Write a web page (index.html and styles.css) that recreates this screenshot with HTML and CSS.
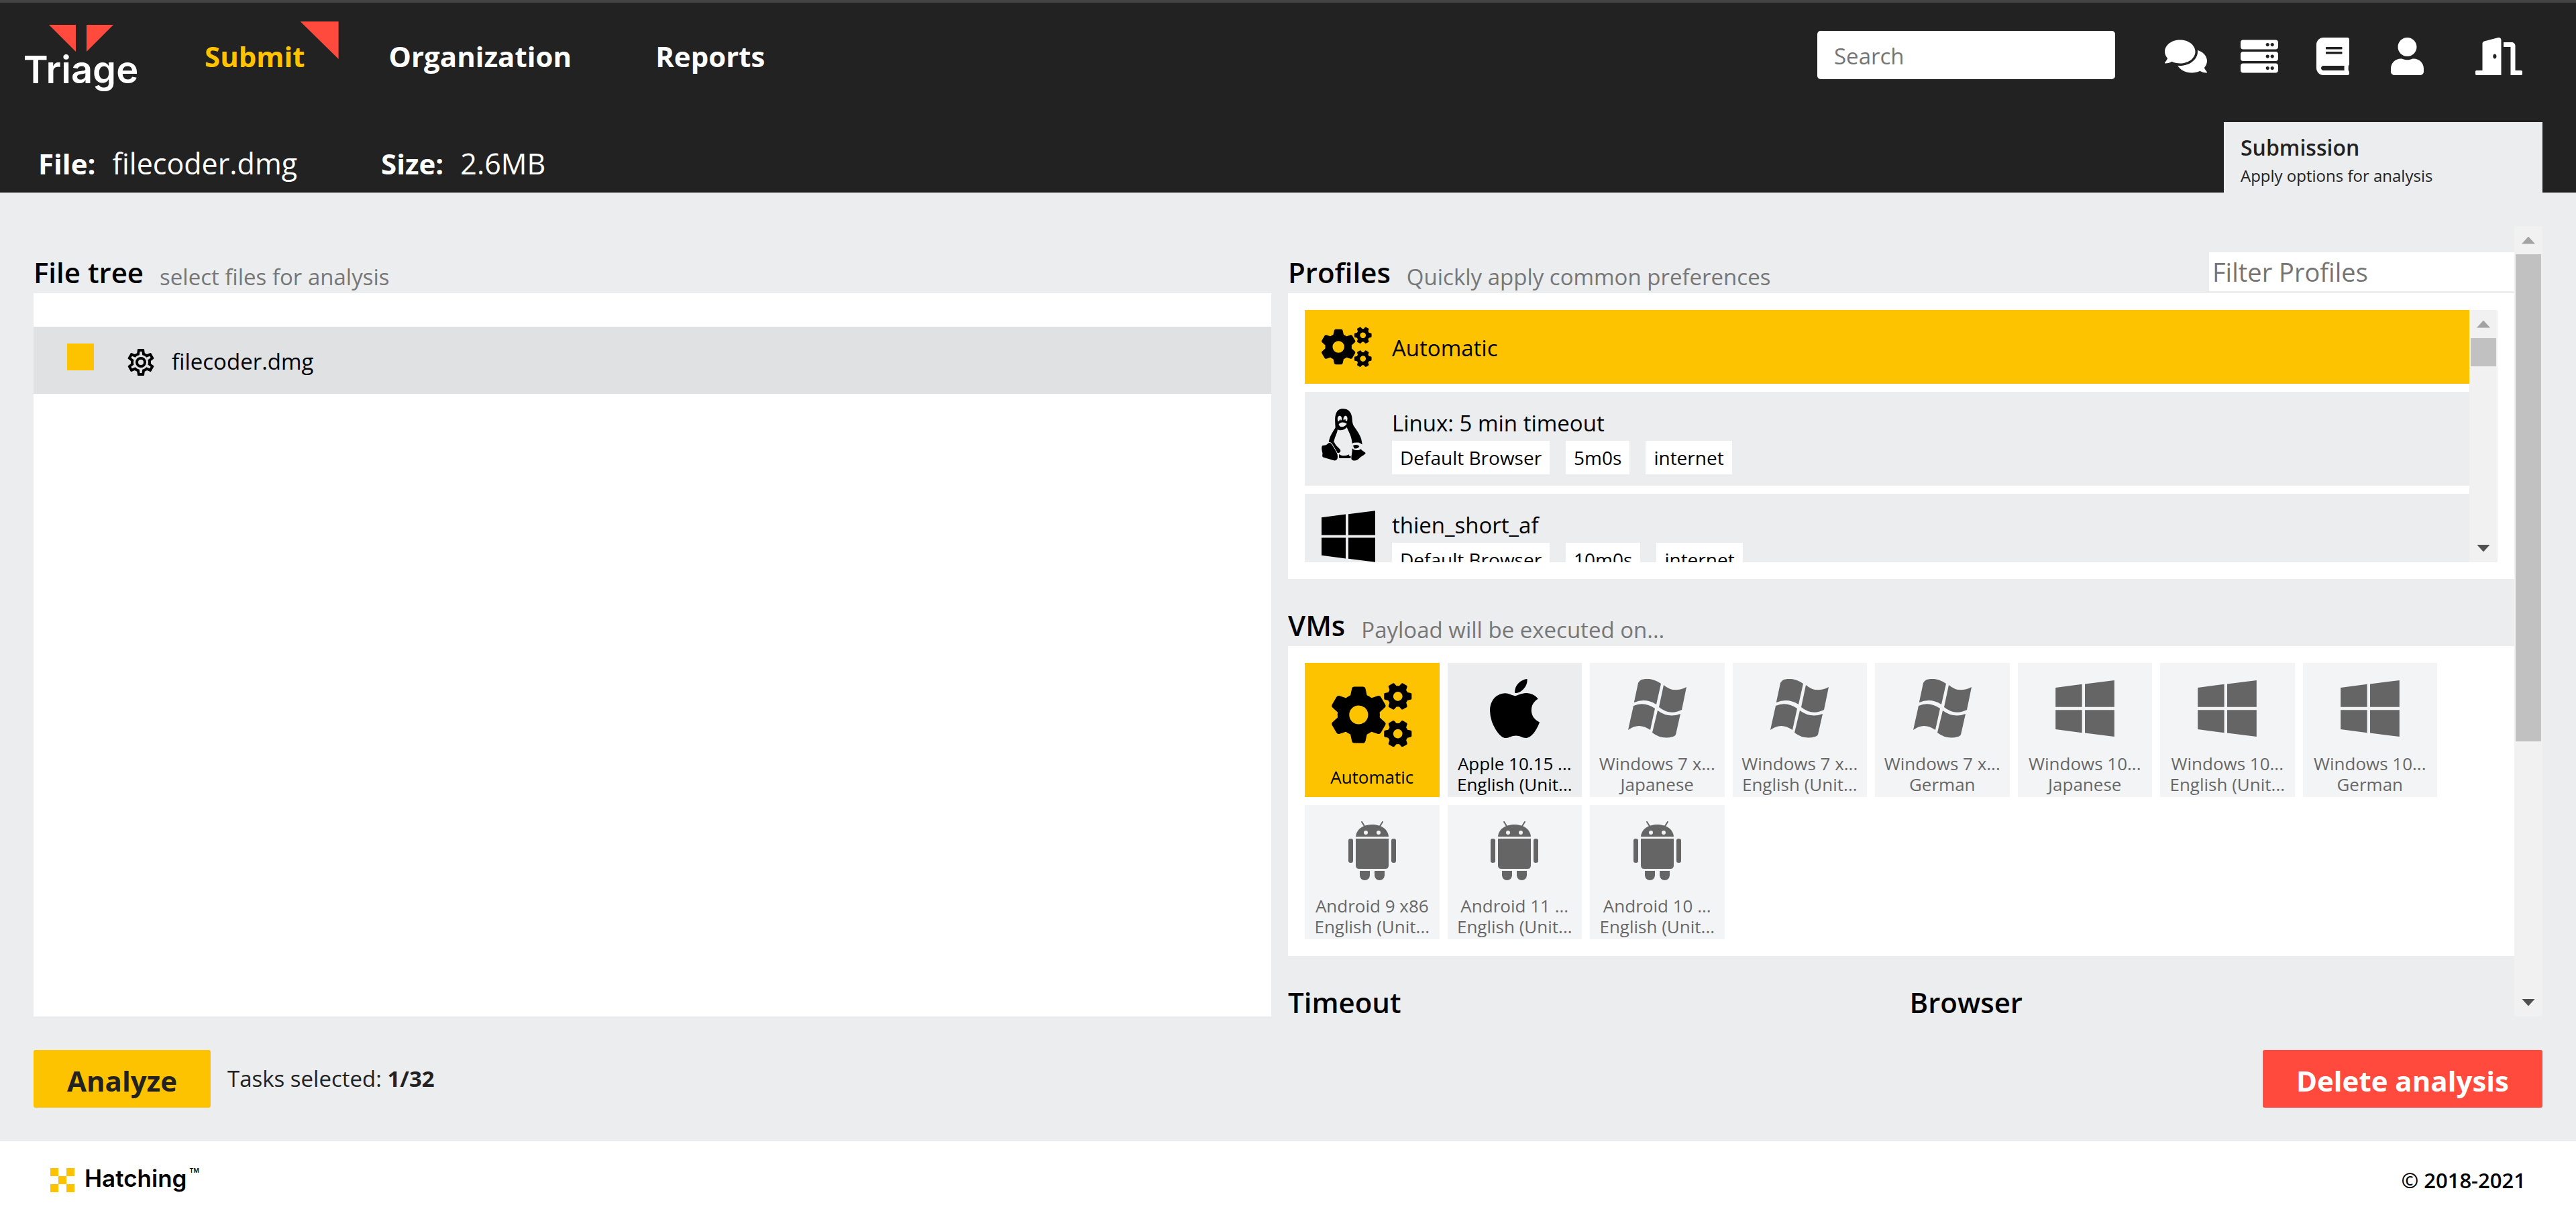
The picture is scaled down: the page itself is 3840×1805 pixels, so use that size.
FILE: index.html
```html
<!DOCTYPE html>
<html lang="en">
<head>
<meta charset="utf-8">
<title>Triage - Submission</title>
<meta name="viewport" content="width=device-width, initial-scale=1">
<link rel="stylesheet" href="styles.css">
</head>
<body>
<svg class="sprite" aria-hidden="true">
  <symbol id="cogs" viewBox="0 0 226 178">
    <g id="cog-big" fill="none" stroke="currentColor">
      <circle cx="76" cy="89" r="43" stroke-width="33"/>
      <g id="tooth-pair" fill="currentColor" stroke="none">
        <path d="M52 38L57 15Q58 10 64 10H88Q94 10 95 15L100 38Z"/>
        <path d="M52 140L57 163Q58 168 64 168H88Q94 168 95 163L100 140Z"/>
      </g>
      <use href="#tooth-pair" transform="rotate(60 76 89)"/>
      <use href="#tooth-pair" transform="rotate(120 76 89)"/>
    </g>
    <use href="#cog-big" transform="translate(186 37) rotate(30) scale(.49) translate(-76 -89)"/>
    <use href="#cog-big" transform="translate(186 142) rotate(30) scale(.49) translate(-76 -89)"/>
  </symbol>
  <symbol id="tux" viewBox="0 0 196 234">
    <path fill="currentColor" d="M61 85C60 60 57 38 64 22C69 6 82 1 95 1C118 1 131 14 135 38C137 55 136 68 146 82C162 105 181 130 180 162L168 200L132 222H80L60 200L31 152C36 120 50 105 61 85Z"/>
    <path class="cut" d="M71 93C80 101 102 96 112 84C120 104 137 128 136 165V212H122C124 206 122 204 118 207C104 213 88 212 77 204V222H68L54 172C50 134 68 118 71 93Z"/>
    <path fill="currentColor" d="M56 150C62 170 84 178 84 188C84 198 74 198 68 198L46 160Z"/>
    <path class="cut" d="M71 50C69 38 75 31 81 32C88 33 91 42 89 51L85 54C86 48 80 46 78 56L73 58ZM97 50C96 39 100 32 107 32C114 33 117 42 113 56L106 53C108 47 102 45 100 53ZM76 70C83 60 98 58 112 68C108 76 98 82 90 82C82 82 76 76 76 70Z"/>
    <path class="edge" fill="currentColor" d="M2 166C8 164 20 166 28 156C33 150 40 152 46 162C54 176 66 192 70 206C74 226 66 234 54 232L8 218C-2 214 5 206 3 198C1 188-3 176 2 166Z"/>
    <path class="edge" fill="currentColor" d="M136 176C146 188 162 188 175 180C180 190 190 192 196 198C196 206 176 212 168 222C158 234 142 236 134 228C128 220 138 200 136 176Z"/>
    <path class="cut" d="M134 158C146 146 172 150 182 160L177 180C164 188 148 188 137 178Z"/>
    <path fill="currentColor" d="M140 166C150 160 160 160 168 168C164 178 150 182 144 176Z"/>
    <path fill="currentColor" d="M138 154C150 148 170 152 180 160V152H138Z"/>
  </symbol>
  <symbol id="win10" viewBox="0 0 240 230">
    <path fill="currentColor" d="M0 30L108 16V109H0ZM120 15L240 0V109H120ZM0 121H108V214L0 200ZM120 121H240V230L120 215Z"/>
  </symbol>
  <symbol id="win7" viewBox="0 0 87 88">
    <path fill="currentColor" d="M9 34L15 6Q16 3 20 1Q35 -3 49 7L42 38Q26 28 9 35ZM53 9Q68 22 87 12L80 46Q62 55 46 42ZM8 40Q24 33 40 44L33 76Q16 64 0 76ZM44 47Q60 59 78 52L71 83Q70 85 67 86Q50 91 36 80Z"/>
  </symbol>
  <symbol id="apple" viewBox="4 32 376 448">
    <path fill="currentColor" d="M318.700 268.700c-.2-36.700 16.400-64.400 50-84.800-18.800-26.900-47.200-41.700-84.700-44.600-35.500-2.800-74.300 20.700-88.500 20.700-15 0-49.400-19.700-76.400-19.700C63.300 141.200 4 184.800 4 273.500q0 39.300 14.400 81.200c12.800 36.700 59 126.700 107.200 125.200 25.200-.6 43-17.900 75.800-17.900 31.800 0 48.300 17.900 76.400 17.900 48.600-.7 90.400-82.500 102.600-119.300-65.200-30.700-61.700-90-61.700-91.900zm-56.600-164.200c27.300-32.400 24.800-61.900 24-72.500-24.100 1.400-52 16.400-67.900 34.900-17.500 19.800-27.800 44.300-25.600 71.900 26.100 2 49.900-11.400 69.500-34.300z"/>
  </symbol>
  <symbol id="android" viewBox="0 0 71 88">
    <g fill="currentColor">
      <path d="M11 23C12 11 23 5 35.500 5S59 11 60 23Z"/>
      <path d="M20 1L25 9M51 1L46 9" stroke="currentColor" stroke-width="2" stroke-linecap="round"/>
      <path d="M11 26H60V66Q60 71 55 71H16Q11 71 11 66Z"/>
      <rect x="0" y="26" width="7" height="36" rx="3"/>
      <rect x="64" y="26" width="7" height="36" rx="3"/>
      <path d="M17 74H32V81Q31 88 24.500 88T17 81ZM39 74H54V81Q53 88 46.500 88T39 81Z"/>
    </g>
    <circle class="cut" cx="26" cy="17" r="3"/>
    <circle class="cut" cx="45" cy="17" r="3"/>
  </symbol>
</svg>

<header class="header">
  <div class="topbar">
    <a class="brand" href="#">
      <svg width="96" height="40" viewBox="0 0 96 40" aria-hidden="true"><path fill="#ff4a3d" d="M0 0H40V40ZM56 0H96L56 40Z"/></svg>
      <span class="brand-name">Triage</span>
    </a>
    <nav class="nav">
      <a class="nav-link active" href="#">Submit</a>
      <a class="nav-link" href="#">Organization</a>
      <a class="nav-link" href="#">Reports</a>
    </nav>
    <input class="search" type="search" placeholder="Search" aria-label="Search">
    <div class="tools">
      <a href="#" aria-label="Chat"><svg viewBox="0 0 576 512"><path d="M416 192c0-88.400-93.100-160-208-160S0 103.600 0 192c0 34.300 14.100 65.900 38 92-13.400 30.200-35.500 54.200-35.800 54.500-2.200 2.300-2.800 5.700-1.500 8.700S4.800 352 8 352c36.600 0 66.900-12.300 88.700-25 32.200 15.700 70.300 25 111.300 25 114.900 0 208-71.600 208-160zm122 220c23.900-26 38-57.700 38-92 0-66.900-53.500-124.200-129.300-148.100.9 6.600 1.300 13.300 1.300 20.100 0 105.900-107.700 192-240 192-10.800 0-21.300-.8-31.700-1.900C207.800 439.600 281.800 480 368 480c41 0 79.100-9.200 111.300-25 21.800 12.700 52.100 25 88.700 25 3.200 0 6.100-1.900 7.300-4.800 1.300-2.900.7-6.300-1.500-8.700-.3-.3-22.400-24.200-35.800-54.500z"/></svg></a>
      <a href="#" aria-label="Machines"><svg viewBox="0 0 512 512"><path id="server-unit" d="M480 160H32c-17.700 0-32-14.300-32-32V64c0-17.700 14.300-32 32-32h448c17.700 0 32 14.300 32 32v64c0 17.700-14.300 32-32 32zm-48-88c-13.300 0-24 10.700-24 24s10.700 24 24 24 24-10.700 24-24-10.700-24-24-24zm-64 0c-13.300 0-24 10.700-24 24s10.700 24 24 24 24-10.700 24-24-10.700-24-24-24z"/><use href="#server-unit" y="160"/><use href="#server-unit" y="320"/></svg></a>
      <a href="#" aria-label="Documentation"><svg viewBox="0 0 448 512"><path d="M448 360V24c0-13.300-10.700-24-24-24H96C43 0 0 43 0 96v320c0 53 43 96 96 96h328c13.300 0 24-10.700 24-24v-16c0-7.500-3.500-14.300-8.900-18.700-4.200-15.400-4.200-59.300 0-74.700 5.400-4.300 8.900-11.100 8.900-18.600zM128 134c0-3.300 2.700-6 6-6h212c3.300 0 6 2.700 6 6v20c0 3.300-2.700 6-6 6H134c-3.300 0-6-2.700-6-6v-20zm0 64c0-3.300 2.700-6 6-6h212c3.300 0 6 2.700 6 6v20c0 3.300-2.700 6-6 6H134c-3.300 0-6-2.700-6-6v-20zm253.400 250H96c-17.700 0-32-14.300-32-32 0-17.600 14.400-32 32-32h285.400c-1.900 17.100-1.900 46.900 0 64z"/></svg></a>
      <a href="#" aria-label="Account"><svg viewBox="0 0 448 512"><path d="M224 256c70.700 0 128-57.300 128-128S294.700 0 224 0 96 57.300 96 128s57.300 128 128 128zm89.600 32h-16.700c-22.200 10.200-46.900 16-72.900 16s-50.600-5.800-72.900-16h-16.700C60.200 288 0 348.200 0 422.400V464c0 26.500 21.500 48 48 48h352c26.500 0 48-21.500 48-48v-41.600c0-74.200-60.200-134.400-134.400-134.400z"/></svg></a>
      <a href="#" aria-label="Log out"><svg viewBox="0 0 640 512"><path d="M624 448h-80V113.450C544 86.190 522.470 64 496 64H384v64h96v384h144c8.840 0 16-7.160 16-16v-32c0-8.840-7.160-16-16-16zM312.240 1.010l-192 49.740C105.990 54.440 96 67.700 96 82.920V448H16c-8.840 0-16 7.160-16 16v32c0 8.840 7.160 16 16 16h336V33.180c0-21.580-19.560-37.410-39.760-32.170zM264 288c-13.250 0-24-14.330-24-32s10.750-32 24-32 24 14.330 24 32-10.750 32-24 32z"/></svg></a>
    </div>
  </div>
  <div class="subbar">
    <dl class="facts">
      <div class="fact"><dt>File:</dt><dd>filecoder.dmg</dd></div>
      <div class="fact"><dt>Size:</dt><dd>2.6MB</dd></div>
    </dl>
    <a class="tab" href="#">
      <span class="tab-title">Submission</span>
      <span class="tab-note">Apply options for analysis</span>
    </a>
  </div>
</header>

<main class="main">
  <div class="workspace">
    <section class="files">
      <div class="section-head"><h2>File tree</h2><p>select files for analysis</p></div>
      <div class="panel tree">
        <label class="file">
          <input class="file-check" type="checkbox" checked>
          <svg width="40" height="40" viewBox="2 2 20 20" aria-hidden="true"><path d="M12,8A4,4 0 0,1 16,12A4,4 0 0,1 12,16A4,4 0 0,1 8,12A4,4 0 0,1 12,8M12,10A2,2 0 0,0 10,12A2,2 0 0,0 12,14A2,2 0 0,0 14,12A2,2 0 0,0 12,10M10,22C9.75,22 9.54,21.82 9.5,21.58L9.13,18.93C8.5,18.68 7.96,18.34 7.44,17.94L4.95,18.95C4.73,19.03 4.46,18.95 4.34,18.73L2.34,15.27C2.21,15.05 2.27,14.78 2.46,14.63L4.57,12.97L4.5,12L4.57,11L2.46,9.37C2.27,9.22 2.21,8.95 2.34,8.73L4.34,5.27C4.46,5.05 4.73,4.96 4.95,5.05L7.44,6.05C7.96,5.66 8.5,5.32 9.13,5.07L9.5,2.42C9.54,2.18 9.75,2 10,2H14C14.25,2 14.46,2.18 14.5,2.42L14.87,5.07C15.5,5.32 16.04,5.66 16.56,6.05L19.05,5.05C19.27,4.96 19.54,5.05 19.66,5.27L21.66,8.73C21.79,8.95 21.73,9.22 21.54,9.37L19.43,11L19.5,12L19.43,13L21.54,14.63C21.73,14.78 21.79,15.05 21.66,15.27L19.66,18.73C19.54,18.95 19.27,19.04 19.05,18.95L16.56,17.95C16.04,18.34 15.5,18.68 14.87,18.93L14.5,21.58C14.46,21.82 14.25,22 14,22H10M11.25,4L10.88,6.61C9.68,6.86 8.62,7.5 7.85,8.39L5.44,7.35L4.69,8.65L6.8,10.2C6.4,11.37 6.4,12.64 6.8,13.8L4.68,15.36L5.43,16.66L7.86,15.62C8.63,16.5 9.68,17.14 10.87,17.38L11.24,20H12.76L13.13,17.39C14.32,17.14 15.37,16.5 16.14,15.62L18.57,16.66L19.32,15.36L17.2,13.81C17.6,12.64 17.6,11.37 17.2,10.2L19.31,8.65L18.56,7.35L16.15,8.39C15.38,7.5 14.32,6.86 13.12,6.62L12.75,4H11.25Z"/></svg>
          <span class="file-name">filecoder.dmg</span>
        </label>
      </div>
    </section>

    <div class="options">
      <div class="options-body">
        <section>
          <div class="section-head">
            <h2>Profiles</h2><p>Quickly apply common preferences</p>
            <input class="filter" type="text" placeholder="Filter Profiles" aria-label="Filter Profiles">
          </div>
          <div class="panel profiles">
            <div class="profile-list">
              <button class="profile selected" type="button">
                <span class="profile-icon"><svg width="75" height="60"><use href="#cogs"/></svg></span>
                <span class="profile-text"><span class="profile-name">Automatic</span></span>
              </button>
              <button class="profile" type="button">
                <span class="profile-icon"><svg width="66" height="78"><use href="#tux"/></svg></span>
                <span class="profile-text">
                  <span class="profile-name">Linux: 5 min timeout</span>
                  <span class="tags"><span class="tag">Default Browser</span><span class="tag">5m0s</span><span class="tag">internet</span></span>
                </span>
              </button>
              <button class="profile" type="button">
                <span class="profile-icon"><svg width="80" height="77"><use href="#win10"/></svg></span>
                <span class="profile-text">
                  <span class="profile-name">thien_short_af</span>
                  <span class="tags"><span class="tag">Default Browser</span><span class="tag">10m0s</span><span class="tag">internet</span></span>
                </span>
              </button>
            </div>
            <div class="scrollbar" aria-hidden="true">
              <span class="arrow up"></span>
              <span class="track"><span class="thumb" style="height: 14.4%"></span></span>
              <span class="arrow down"></span>
            </div>
          </div>
        </section>

        <section>
          <div class="section-head"><h2>VMs</h2><p>Payload will be executed on...</p></div>
          <div class="panel vms-panel">
            <div class="vms">
              <button class="vm selected" type="button"><span class="vm-icon"><svg width="120" height="95"><use href="#cogs"/></svg></span><span>Automatic</span></button>
              <button class="vm" type="button"><span class="vm-icon"><svg width="74" height="88"><use href="#apple"/></svg></span><span>Apple 10.15 ...</span><span>English (Unit...</span></button>
              <button class="vm" type="button" disabled><span class="vm-icon"><svg width="87" height="88"><use href="#win7"/></svg></span><span>Windows 7 x...</span><span>Japanese</span></button>
              <button class="vm" type="button" disabled><span class="vm-icon"><svg width="87" height="88"><use href="#win7"/></svg></span><span>Windows 7 x...</span><span>English (Unit...</span></button>
              <button class="vm" type="button" disabled><span class="vm-icon"><svg width="87" height="88"><use href="#win7"/></svg></span><span>Windows 7 x...</span><span>German</span></button>
              <button class="vm" type="button" disabled><span class="vm-icon"><svg width="88" height="84"><use href="#win10"/></svg></span><span>Windows 10...</span><span>Japanese</span></button>
              <button class="vm" type="button" disabled><span class="vm-icon"><svg width="88" height="84"><use href="#win10"/></svg></span><span>Windows 10...</span><span>English (Unit...</span></button>
              <button class="vm" type="button" disabled><span class="vm-icon"><svg width="88" height="84"><use href="#win10"/></svg></span><span>Windows 10...</span><span>German</span></button>
              <button class="vm" type="button" disabled><span class="vm-icon"><svg width="71" height="88"><use href="#android"/></svg></span><span>Android 9 x86</span><span>English (Unit...</span></button>
              <button class="vm" type="button" disabled><span class="vm-icon"><svg width="71" height="88"><use href="#android"/></svg></span><span>Android 11 ...</span><span>English (Unit...</span></button>
              <button class="vm" type="button" disabled><span class="vm-icon"><svg width="71" height="88"><use href="#android"/></svg></span><span>Android 10 ...</span><span>English (Unit...</span></button>
            </div>
          </div>
        </section>

        <div class="pair">
          <div class="section-head"><h2>Timeout</h2></div>
          <div class="section-head"><h2>Browser</h2></div>
        </div>
      </div>
      <div class="scrollbar" aria-hidden="true">
        <span class="arrow up"></span>
        <span class="track"><span class="thumb" style="height: 66.4%"></span></span>
        <span class="arrow down"></span>
      </div>
    </div>
  </div>

  <div class="actions">
    <button class="action analyze" type="button">Analyze</button>
    <p class="tasks">Tasks selected: <strong>1/32</strong></p>
    <button class="action delete" type="button">Delete analysis</button>
  </div>
</main>

<footer class="footer">
  <a class="hatching" href="#">
    <svg width="36" height="36" viewBox="0 0 36 36" aria-hidden="true"><path fill="#fdc300" d="M0 0H12V12H0ZM24 0H36V12H24ZM12 12H24V24H12ZM0 24H12V36H0ZM24 24H36V36H24Z"/></svg>
    <span class="hatching-name">Hatching</span><span class="tm">TM</span>
  </a>
  <p class="copyright">© 2018-2021</p>
</footer>
</body>
</html>
```

FILE: styles.css
```css
:root {
  --dark: #222;
  --page: #ebedef;
  --yellow: #fdc300;
  --red: #ff4a3d;
  --muted: #777;
}

* { box-sizing: border-box; }

body {
  margin: 0;
  height: 100vh;
  display: flex;
  flex-direction: column;
  background: #fff;
  color: #000;
  font-family: "Open Sans", "Noto Sans", sans-serif;
  font-size: 33px;
  line-height: 48px;
}

h2, p, dl, dd { margin: 0; }
a { color: inherit; text-decoration: none; }
button, input { font: inherit; color: inherit; border: 0; padding: 0; margin: 0; }
input::placeholder { color: #757575; opacity: 1; }
svg { display: block; flex: none; }

.sprite { position: absolute; width: 0; height: 0; }
.cut { fill: var(--page); }
.edge { stroke: var(--page); stroke-width: 6; paint-order: stroke; }

/* Header */
.header {
  background: var(--dark);
  color: #fff;
  border-top: 4px solid #444;
}

.topbar {
  display: flex;
  align-items: center;
  height: 160px;
  padding: 0 35px 0 36px;
}

.brand {
  align-self: flex-start;
  display: flex;
  flex-direction: column;
  align-items: center;
  width: 169px;
  padding-top: 33px;
}

.brand-name {
  font-family: Inter, sans-serif;
  font-size: 56px;
  line-height: 54px;
  font-weight: 600;
}

.nav {
  display: flex;
  gap: 25px;
  margin: 0 auto 0 50px;
}

.nav-link {
  position: relative;
  padding: 0 50px;
  font-size: 42px;
  line-height: 104px;
  font-weight: 700;
}

.nav-link.active { color: var(--yellow); }

.nav-link.active::after {
  content: "";
  position: absolute;
  top: 0;
  right: 0;
  width: 57px;
  height: 56px;
  background: var(--red);
  clip-path: polygon(0 0, 100% 0, 100% 100%);
}

.search {
  width: 444px;
  height: 72px;
  margin-bottom: 4px;
  padding: 3px 25px 0;
  border-radius: 5px;
  background: #fff;
  color: #000;
  appearance: none;
}

.tools {
  display: grid;
  grid-template-columns: 110px 110px 108px 114px 160px;
  justify-items: center;
  margin-left: 50px;
}

.tools svg { height: 56px; fill: #fff; }

.subbar {
  display: flex;
  justify-content: space-between;
  align-items: flex-end;
  padding: 18px 50px 0 57px;
}

.facts {
  display: flex;
  gap: 125px;
  padding-bottom: 13px;
  font-size: 43px;
  line-height: 60px;
}

.fact { display: flex; gap: 25px; }
.fact dt { font-weight: 700; font-size: 42px; }

.tab {
  display: flex;
  flex-direction: column;
  gap: 6px;
  width: 475px;
  padding: 18px 25px 9px;
  background: var(--page);
  color: var(--dark);
}

.tab-title { font-size: 32px; line-height: 40px; font-weight: 600; }
.tab-note { font-size: 24px; line-height: 32px; }

/* Workspace */
.main {
  flex: 1;
  min-height: 0;
  display: flex;
  flex-direction: column;
  gap: 50px;
  padding: 50px;
  background: var(--page);
}

.workspace {
  flex: 1;
  min-height: 0;
  display: grid;
  grid-template-columns: calc(50% - 25px) minmax(0, 1fr);
  grid-template-rows: minmax(0, 1fr);
  gap: 25px;
}

.files { display: flex; flex-direction: column; }

.section-head {
  display: flex;
  align-items: flex-end;
  gap: 24px;
  height: 100px;
}

.section-head h2 { font-size: 42px; line-height: 62px; font-weight: 600; }
.section-head p { color: var(--muted); }

.panel { background: #fff; }

.tree { flex: 1; padding-top: 50px; }

.file {
  display: flex;
  align-items: center;
  height: 100px;
  padding: 0 50px;
  background: #dfe1e3;
}

.file-check {
  appearance: none;
  width: 40px;
  height: 40px;
  margin: 0 50px 10px 0;
  background: var(--yellow);
}

.file svg { margin-top: 6px; }
.file-name { margin-left: 26px; padding-top: 3px; }

.options { display: flex; min-height: 0; }
.options-body { flex: 1; min-width: 0; overflow: hidden; }

.filter {
  width: 455px;
  height: 58px;
  margin: 0 0 3px auto;
  padding: 0 5px;
  background: #fff;
  font-size: 38px;
}

.profiles {
  display: flex;
  height: 426px;
  padding: 25px;
}

.profile-list {
  flex: 1;
  display: flex;
  flex-direction: column;
  gap: 12px;
  overflow: hidden;
}

.profile {
  flex: none;
  display: flex;
  align-items: flex-start;
  padding: 25px 25px 17px;
  background: var(--page);
  text-align: left;
}

.profile-icon { width: 105px; }
.profile-text { display: flex; flex-direction: column; gap: 4px; }
.profile-name { line-height: 44px; }
.profile.selected { align-items: center; padding: 25px; }
.profile.selected .profile-name { padding-top: 3px; }
.profile.selected,
.vm.selected { background: var(--yellow); }

.tags { display: flex; gap: 24px; }

.tag {
  padding: 0 12px;
  background: #fff;
  font-size: 28px;
  line-height: 50px;
}

.vms-panel { padding: 25px; }

.vms {
  display: grid;
  grid-template-columns: repeat(auto-fill, minmax(200px, 1fr));
  grid-auto-rows: 200px;
  gap: 12px;
  max-width: 1688px;
}

.vm {
  display: flex;
  flex-direction: column;
  align-items: center;
  padding-bottom: 3px;
  background: var(--page);
  font-size: 26px;
  line-height: 31px;
  white-space: nowrap;
}

.vm.selected { padding-bottom: 14px; }
.vm:disabled { opacity: .6; color: #000; }
.vm-icon { flex: 1; display: flex; align-items: center; }

.pair {
  display: grid;
  grid-template-columns: 1fr 1fr;
  gap: 25px;
}

/* Scrollbars */
.scrollbar {
  display: flex;
  flex-direction: column;
  width: 42px;
  border-radius: 2px;
  background: #f1f1f1;
}

.arrow { height: 42px; display: flex; align-items: center; justify-content: center; }
.arrow::before { content: ""; width: 20px; height: 11px; background: #a3a3a3; clip-path: polygon(50% 0, 100% 100%, 0 100%); }
.arrow.down::before { background: #505050; clip-path: polygon(0 0, 100% 0, 50% 100%); }
.track { flex: 1; padding: 0 2px; }
.thumb { display: block; background: #c1c1c1; }

/* Actions */
.actions { display: flex; align-items: center; gap: 25px; }

.action {
  height: 86px;
  padding: 5px 50px 0;
  border-radius: 3px;
  font-size: 42px;
  line-height: 60px;
  font-weight: 700;
}

.analyze { background: var(--yellow); color: var(--dark); }
.delete { margin-left: auto; background: var(--red); color: #fff; }
.tasks { color: var(--dark); }

/* Footer */
.footer {
  display: flex;
  align-items: center;
  justify-content: space-between;
  height: 104px;
  padding: 12px 75px 0;
}

.hatching { display: flex; align-items: flex-start; font-family: Inter, sans-serif; }
.hatching-name { margin-left: 15px; font-size: 35px; line-height: 30px; font-weight: 600; }
.tm { margin-left: 4px; font-size: 9px; line-height: 8px; font-weight: 600; }
.copyright { font-size: 31px; font-weight: 600; }
```
